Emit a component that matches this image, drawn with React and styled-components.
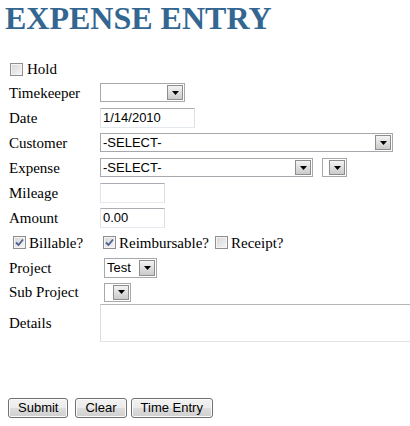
import React from "react";
import styled, { createGlobalStyle } from "styled-components";

const GlobalStyle = createGlobalStyle`
  html, body {
    margin: 0;
    padding: 0;
    background: #fff;
    overflow: hidden;
  }
  body {
    font-family: "Liberation Serif", "Times New Roman", serif;
    color: #000;
  }
`;

const Page = styled.div`
  width: 410px;
  height: 426px;
  display: flex;
  flex-direction: column;
`;

const Title = styled.h1`
  margin: 0 0 0 5px;
  font-family: "Liberation Serif", "Times New Roman", serif;
  font-size: 32px;
  line-height: 36px;
  font-weight: bold;
  color: #336791;
  letter-spacing: 0;
`;

const HoldRow = styled.div`
  display: flex;
  align-items: center;
  height: 22px;
  margin-top: 22px;
  padding-left: 10px;
`;

const Form = styled.div`
  display: flex;
  flex-direction: column;
`;

const FieldRow = styled.div`
  display: grid;
  grid-template-columns: 100px 1fr;
  align-items: center;
  height: ${(p) => p.$h || 25}px;
`;

const Label = styled.div`
  padding-left: 9px;
  font-size: 15px;
  line-height: 18px;
  white-space: nowrap;
`;

const Value = styled.div`
  display: flex;
  align-items: center;
  gap: ${(p) => p.$gap || 0}px;
  padding-left: ${(p) => p.$indent || 0}px;
`;

const SelectBox = styled.div`
  box-sizing: border-box;
  width: ${(p) => p.$w}px;
  height: ${(p) => p.$h || 19}px;
  border: 1px solid #a5a9ad;
  background: #fff;
  display: flex;
  align-items: stretch;
  flex: none;
`;

const SelectText = styled.div`
  flex: 1;
  padding-left: 2px;
  font-family: "Liberation Sans", Arial, sans-serif;
  font-size: 13px;
  line-height: 17px;
  white-space: nowrap;
  overflow: hidden;
`;

const ArrowButton = styled.div`
  box-sizing: border-box;
  width: 16px;
  margin: 1px;
  border: 1px solid #8d8d8d;
  background: linear-gradient(#f4f4f4, #dcdcdc 55%, #cbcbcb);
  display: flex;
  align-items: center;
  justify-content: center;
`;

const TextInput = styled.div`
  box-sizing: border-box;
  width: ${(p) => p.$w}px;
  height: 20px;
  border: 1px solid;
  border-color: #abadb3 #dbdfe6 #e3e9ef #e2e3ea;
  padding-left: 2px;
  font-family: "Liberation Sans", Arial, sans-serif;
  font-size: 13px;
  line-height: 18px;
  background: #fff;
`;

const TextArea = styled.textarea`
  box-sizing: border-box;
  width: 320px;
  height: 38px;
  margin: 0;
  border: 1px solid;
  border-color: #b5b5b5 #dcdcdc #e3e3e3 #dcdcdc;
  resize: none;
  outline: none;
`;

const CheckLabel = styled.label`
  display: inline-flex;
  align-items: center;
  font-size: 15px;
  line-height: 18px;
  white-space: nowrap;
`;

const Box = styled.span`
  box-sizing: border-box;
  width: 13px;
  height: 13px;
  margin-right: ${(p) => p.$mr || 3}px;
  border: 1px solid #8f8f8f;
  background: linear-gradient(135deg, #d6d6d6, #f6f6f6);
  display: inline-flex;
  align-items: center;
  justify-content: center;
  box-shadow: inset 0 0 0 1px #f4f4f4;
`;

const ButtonRow = styled.div`
  display: flex;
  align-items: center;
  margin-top: auto;
  margin-bottom: 8px;
  padding-left: 8px;
`;

const Button = styled.button`
  box-sizing: border-box;
  height: 20px;
  margin: 0 ${(p) => p.$mr || 0}px 0 0;
  padding: 0 9px;
  border: 1px solid #707070;
  border-radius: 3px;
  background: linear-gradient(#f2f2f2, #ebebeb 50%, #dddddd 51%, #cfcfcf);
  font-family: "Liberation Sans", Arial, sans-serif;
  font-size: 13px;
  line-height: 16px;
  color: #000;
  box-shadow: inset 0 0 0 1px #fcfcfc;
`;

function Arrow() {
  return (
    <svg width="7" height="4" viewBox="0 0 7 4">
      <path d="M0 0 H7 L3.5 4 Z" fill="#000" />
    </svg>
  );
}

function Select({ w, h, text }) {
  return (
    <SelectBox $w={w} $h={h}>
      <SelectText>{text}</SelectText>
      <ArrowButton>
        <Arrow />
      </ArrowButton>
    </SelectBox>
  );
}

function Checkbox({ checked, label, mr }) {
  return (
    <CheckLabel>
      <Box $mr={mr}>
        {checked && (
          <svg width="9" height="9" viewBox="0 0 9 9">
            <path
              d="M1 4.5 L3.5 7 L8 1.5"
              fill="none"
              stroke="#4d5f8f"
              strokeWidth="1.8"
            />
          </svg>
        )}
      </Box>
      {label}
    </CheckLabel>
  );
}

export default function App() {
  return (
    <>
      <GlobalStyle />
      <Page>
        <Title>EXPENSE ENTRY</Title>
        <HoldRow>
          <Checkbox label="Hold" mr={4} />
        </HoldRow>
        <Form>
          <FieldRow>
            <Label>Timekeeper</Label>
            <Value>
              <Select w={85} text="" />
            </Value>
          </FieldRow>
          <FieldRow>
            <Label>Date</Label>
            <Value>
              <TextInput $w={95}>1/14/2010</TextInput>
            </Value>
          </FieldRow>
          <FieldRow>
            <Label>Customer</Label>
            <Value>
              <Select w={293} text="-SELECT-" />
            </Value>
          </FieldRow>
          <FieldRow>
            <Label>Expense</Label>
            <Value $gap={9}>
              <Select w={213} text="-SELECT-" />
              <Select w={25} text="" />
            </Value>
          </FieldRow>
          <FieldRow>
            <Label>Mileage</Label>
            <Value>
              <TextInput $w={65} />
            </Value>
          </FieldRow>
          <FieldRow>
            <Label>Amount</Label>
            <Value>
              <TextInput $w={65}>0.00</TextInput>
            </Value>
          </FieldRow>
          <FieldRow>
            <Value $indent={13}>
              <Checkbox checked label="Billable?" />
            </Value>
            <Value $indent={3} $gap={6}>
              <Checkbox checked label="Reimbursable?" />
              <Checkbox label="Receipt?" />
            </Value>
          </FieldRow>
          <FieldRow>
            <Label>Project</Label>
            <Value $indent={4}>
              <Select w={53} h={20} text="Test" />
            </Value>
          </FieldRow>
          <FieldRow $h={24}>
            <Label>Sub Project</Label>
            <Value $indent={4}>
              <Select w={27} text="" />
            </Value>
          </FieldRow>
          <FieldRow $h={38}>
            <Label>Details</Label>
            <Value>
              <TextArea />
            </Value>
          </FieldRow>
        </Form>
        <ButtonRow>
          <Button $mr={7}>Submit</Button>
          <Button $mr={4}>Clear</Button>
          <Button>Time Entry</Button>
        </ButtonRow>
      </Page>
    </>
  );
}
